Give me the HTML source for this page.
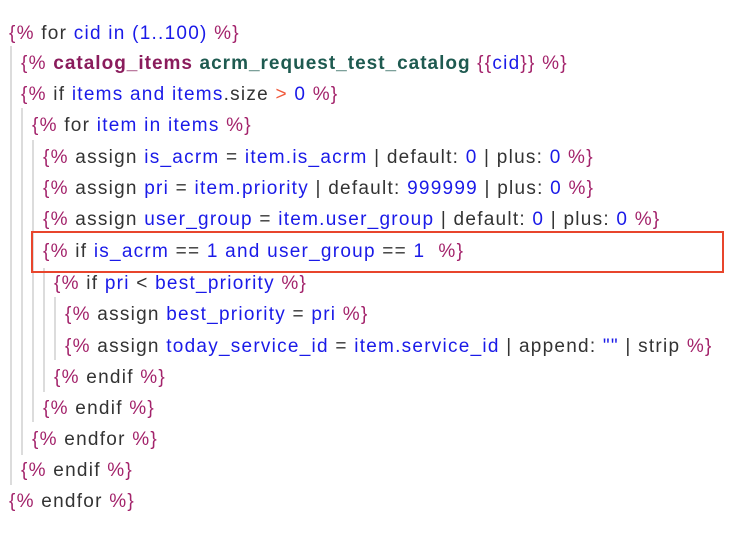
<!DOCTYPE html>
<html><head><meta charset="utf-8"><style>
body{margin:0;width:750px;height:538px;background:#fff;overflow:hidden;position:relative;font-family:"Liberation Sans","DejaVu Sans",sans-serif;font-size:19px;color:#333;}
.l{position:absolute;white-space:pre;line-height:24px;letter-spacing:1.25px;margin-top:2px}
.p{color:#a3236b}.b{color:#1a1ae8}.g{color:#1e5a50;font-weight:bold;letter-spacing:1px}.k{color:#8a1c5c;font-weight:bold;letter-spacing:1px}.o{color:#f05a3c}
.v{position:absolute;width:2px;background:#dcdcdc}
.box{position:absolute;left:31px;top:231px;width:689px;height:38px;border:2px solid #e8452c;}
</style></head><body>
<div class="v" style="left:10px;top:46px;height:439px"></div>
<div class="v" style="left:21px;top:108px;height:347px"></div>
<div class="v" style="left:32px;top:140px;height:282px"></div>
<div class="v" style="left:43px;top:268px;height:124px"></div>
<div class="v" style="left:54px;top:297px;height:63px"></div>
<div class="box"></div>
<div class="l" style="left:9px;top:20px"><span class="p">{%</span> for <span class="b">cid in (1..100)</span> <span class="p">%}</span></div>
<div class="l" style="left:21px;top:50px"><span class="p">{%</span> <span class="k">catalog_items</span> <span class="g">acrm_request_test_catalog</span> <span class="p">{{</span><span class="b">cid</span><span class="p">}} %}</span></div>
<div class="l" style="left:21px;top:81px"><span class="p">{%</span> if <span class="b">items and items</span>.size <span class="o">&gt;</span> <span class="b">0</span> <span class="p">%}</span></div>
<div class="l" style="left:32px;top:112px"><span class="p">{%</span> for <span class="b">item in items</span> <span class="p">%}</span></div>
<div class="l" style="left:43px;top:144px"><span class="p">{%</span> assign <span class="b">is_acrm</span> = <span class="b">item.is_acrm</span> | default: <span class="b">0</span> | plus: <span class="b">0</span> <span class="p">%}</span></div>
<div class="l" style="left:43px;top:175px"><span class="p">{%</span> assign <span class="b">pri</span> = <span class="b">item.priority</span> | default: <span class="b">999999</span> | plus: <span class="b">0</span> <span class="p">%}</span></div>
<div class="l" style="left:43px;top:206px"><span class="p">{%</span> assign <span class="b">user_group</span> = <span class="b">item.user_group</span> | default: <span class="b">0</span> | plus: <span class="b">0</span> <span class="p">%}</span></div>
<div class="l" style="left:43px;top:238px"><span class="p">{%</span> if <span class="b">is_acrm</span> == <span class="b">1 and user_group</span> == <span class="b">1</span>  <span class="p">%}</span></div>
<div class="l" style="left:54px;top:270px"><span class="p">{%</span> if <span class="b">pri</span> &lt; <span class="b">best_priority</span> <span class="p">%}</span></div>
<div class="l" style="left:65px;top:301px"><span class="p">{%</span> assign <span class="b">best_priority</span> = <span class="b">pri</span> <span class="p">%}</span></div>
<div class="l" style="left:65px;top:333px"><span class="p">{%</span> assign <span class="b">today_service_id</span> = <span class="b">item.service_id</span> | append: <span class="b">""</span> | strip <span class="p">%}</span></div>
<div class="l" style="left:54px;top:364px"><span class="p">{%</span> endif <span class="p">%}</span></div>
<div class="l" style="left:43px;top:395px"><span class="p">{%</span> endif <span class="p">%}</span></div>
<div class="l" style="left:32px;top:426px"><span class="p">{%</span> endfor <span class="p">%}</span></div>
<div class="l" style="left:21px;top:457px"><span class="p">{%</span> endif <span class="p">%}</span></div>
<div class="l" style="left:9px;top:488px"><span class="p">{%</span> endfor <span class="p">%}</span></div>
</body></html>
